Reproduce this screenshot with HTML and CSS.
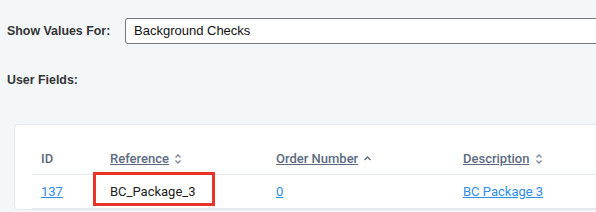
FILE: index.html
```html
<!DOCTYPE html>
<html>

<head>
  <meta http-equiv="Content-Type" content="text/html; charset=UTF-8">
  <title>User Fields</title>
  <link rel="stylesheet" href="styles.css">
</head>

<body>

  <div id="filtro">
    <label for="tipo">Show Values For:</label>
    <div class="selector" id="tipo">Background Checks</div>
  </div>

  <p id="titulo_campos">User Fields:</p>

  <div class="tarjeta">
    <table class="tabla">
      <thead>
        <tr>
          <th class="col_id">ID</th>
          <th class="col_ref"><a href="#">Reference</a>
            <svg class="orden" width="8" height="12" viewBox="0 0 8 12">
              <path d="M1.5 4.5 L4 2 L6.5 4.5 M1.5 7.5 L4 10 L6.5 7.5" fill="none" stroke="#7b879a" stroke-width="1.3" />
            </svg>
          </th>
          <th class="col_orden"><a href="#">Order Number</a>
            <svg class="orden" width="9" height="12" viewBox="0 0 9 12">
              <path d="M1.5 7 L4.5 4 L7.5 7" fill="none" stroke="#5c6b82" stroke-width="1.4" />
            </svg>
          </th>
          <th class="col_desc"><a href="#">Description</a>
            <svg class="orden" width="8" height="12" viewBox="0 0 8 12">
              <path d="M1.5 4.5 L4 2 L6.5 4.5 M1.5 7.5 L4 10 L6.5 7.5" fill="none" stroke="#7b879a" stroke-width="1.3" />
            </svg>
          </th>
        </tr>
      </thead>
      <tbody>
        <tr>
          <td><a href="#">137</a></td>
          <td class="marcada">BC_Package_3<span class="recuadro"></span></td>
          <td><a href="#">0</a></td>
          <td><a href="#">BC Package 3</a></td>
        </tr>
      </tbody>
    </table>
  </div>

</body>

</html>
```

FILE: styles.css
```css
body {
  margin: 0;
  width: 596px;
  height: 212px;
  overflow: hidden;
  background: #f4f7fa;
  font-family: "Liberation Sans", Arial, sans-serif;
  color: #333;
}

#filtro {
  display: flex;
  align-items: center;
  padding: 18px 0 0 7px;
}

#filtro label {
  width: 118px;
  flex-shrink: 0;
  white-space: nowrap;
  font-size: 12.4px;
  font-weight: bold;
}

.selector {
  box-sizing: border-box;
  width: 560px;
  flex-shrink: 0;
  height: 26px;
  padding: 0 8px;
  line-height: 24px;
  border: 1px solid #777;
  border-radius: 3px;
  background: #fff;
  font-size: 13px;
  color: #111;
}

#titulo_campos {
  margin: 29px 0 0 7px;
  font-size: 12.4px;
  font-weight: bold;
}

.tarjeta {
  margin: 37px 0 0 14px;
  width: 640px;
  padding: 17px 0 0 17px;
  background: #fff;
  border: 1px solid #e4e8ed;
  border-radius: 4px;
}

.tabla {
  border-collapse: collapse;
  width: 620px;
  font-family: Roboto, "Liberation Sans", sans-serif;
  font-size: 13px;
}

.tabla th {
  text-align: left;
  font-weight: 500;
  color: #5c6b82;
  height: 32px;
  padding: 0 9px;
  border-bottom: 1px solid #e6e9ee;
}

.tabla th a {
  color: #5c6b82;
}

.orden {
  vertical-align: -2px;
  margin-left: 2px;
}

.col_id {
  width: 51px;
}

.col_ref {
  width: 148px;
}

.col_orden {
  width: 169px;
}

.tabla td {
  height: 33px;
  padding: 0 9px;
  border-bottom: 1px solid #e6e9ee;
  color: #1c1c1c;
}

.tabla td a {
  color: #2e8de6;
}

.marcada {
  position: relative;
}

.recuadro {
  position: absolute;
  left: -8px;
  top: -3px;
  width: 116px;
  height: 28px;
  border: 3px solid #e8342a;
}
```
